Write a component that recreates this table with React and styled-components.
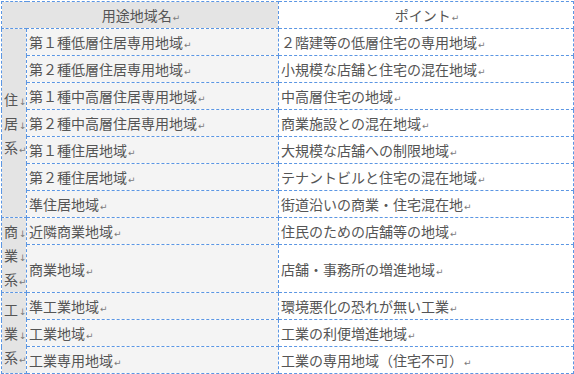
import React from "react";
import styled, { createGlobalStyle } from "styled-components";

const GlobalStyle = createGlobalStyle`
  html, body {
    margin: 0;
    padding: 0;
    background: #ffffff;
  }
`;

//================================================================//
//Data//
const groups = [
  {
    label: ["住", "居", "系"],
    rows: [
      ["第１種低層住居専用地域", "２階建等の低層住宅の専用地域"],
      ["第２種低層住居専用地域", "小規模な店舗と住宅の混在地域"],
      ["第１種中高層住居専用地域", "中高層住宅の地域"],
      ["第２種中高層住居専用地域", "商業施設との混在地域"],
      ["第１種住居地域", "大規模な店舗への制限地域"],
      ["第２種住居地域", "テナントビルと住宅の混在地域"],
      ["準住居地域", "街道沿いの商業・住宅混在地"],
    ],
  },
  {
    label: ["商", "業", "系"],
    rows: [
      ["近隣商業地域", "住民のための店舗等の地域"],
      ["商業地域", "店舗・事務所の増進地域", true],
    ],
  },
  {
    label: ["工", "業", "系"],
    rows: [
      ["準工業地域", "環境悪化の恐れが無い工業"],
      ["工業地域", "工業の利便増進地域"],
      ["工業専用地域", "工業の専用地域（住宅不可）"],
    ],
  },
];

//================================================================//
//Styled Components//
const Wrap = styled.div`
  padding: 1px 0 0 1px;
`;

const Table = styled.table`
  border-collapse: collapse;
  table-layout: fixed;
  width: 572px;
  font-family: "Noto Sans CJK JP", "Noto Sans", sans-serif;
  font-size: 14px;
  color: #555555;
`;

const Row = styled.tr`
  height: ${(p) => (p.$tall ? "48px" : "27px")};
`;

const Cell = styled.td`
  border: 1px dashed #5b96e3;
  padding: 0 0 0 2px;
  line-height: 18px;
  white-space: nowrap;
  overflow: hidden;
  vertical-align: middle;
  text-align: ${(p) => (p.$center ? "center" : "left")};
  background: ${(p) =>
    p.$tone === "dark" ? "#e4e4e4" : p.$tone === "light" ? "#f4f4f4" : "#ffffff"};
`;

const GroupCell = styled(Cell)`
  padding: 0 0 0 2px;
  line-height: 24px;
  background: #e4e4e4;
`;

const Mark = styled.span`
  font-family: "DejaVu Sans", sans-serif;
  font-size: 9px;
  line-height: 1;
  color: #7a7a7a;
  margin-left: 1px;
`;

const ParaMark = () => <Mark>↵</Mark>;
const BreakMark = () => <Mark>↓</Mark>;

//================================================================//
//Render//
const App = () => {
  return (
    <Wrap>
      <GlobalStyle />
      <Table>
        <colgroup>
          <col style={{ width: 25 }} />
          <col style={{ width: 252 }} />
          <col style={{ width: 295 }} />
        </colgroup>
        <tbody>
          <Row>
            <Cell colSpan={2} $tone="dark" $center>
              用途地域名
              <ParaMark />
            </Cell>
            <Cell $center>
              ポイント
              <ParaMark />
            </Cell>
          </Row>
          {groups.map((group) =>
            group.rows.map(([name, point, tall], i) => (
              <Row key={name} $tall={tall}>
                {i === 0 && (
                  <GroupCell rowSpan={group.rows.length}>
                    {group.label.map((ch, j) => (
                      <div key={j}>
                        {ch}
                        {j < group.label.length - 1 ? <BreakMark /> : <ParaMark />}
                      </div>
                    ))}
                  </GroupCell>
                )}
                <Cell $tone="light">
                  {name}
                  <ParaMark />
                </Cell>
                <Cell>
                  {point}
                  <ParaMark />
                </Cell>
              </Row>
            ))
          )}
        </tbody>
      </Table>
    </Wrap>
  );
};

export default App;
